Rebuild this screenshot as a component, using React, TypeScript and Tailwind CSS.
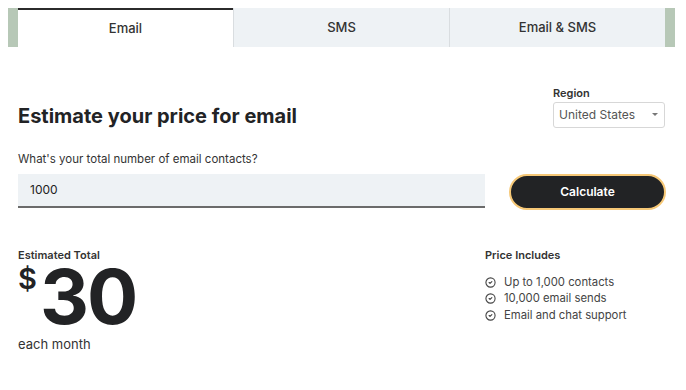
import { CircleCheck } from "lucide-react";

const tabs = ["Email", "SMS", "Email & SMS"];
const includes = ["Up to 1,000 contacts", "10,000 email sends", "Email and chat support"];

export default function App() {
  return (
    <div className="min-h-[390px] w-[686px] bg-white font-['Inter',sans-serif] text-[#222325]">
      <div className="ml-2 mt-2 flex w-[667px] bg-[#b7c8b7] px-[10px]">
        {tabs.map((t, i) => (
          <div
            key={t}
            className={
              i === 0
                ? "flex h-[39px] flex-1 items-center justify-center border-t-2 border-[#2b2b2b] bg-white text-[13px] font-medium text-[#333]"
                : "flex h-[39px] flex-1 items-center justify-center border-l border-[#d9dde0] bg-[#eef2f5] text-[13px] font-medium text-[#333]"
            }
          >
            {t}
          </div>
        ))}
      </div>

      <div className="px-[18px]">
        <div className="mt-[38px] flex items-start justify-between">
          <h1 className="mt-[16px] text-[20px] font-bold text-[#222325]">
            Estimate your price for email
          </h1>
          <div className="mr-[3px] flex flex-col">
            <label className="text-[11px] font-semibold text-[#333]">Region</label>
            <div className="flex h-[26px] w-[112px] items-center justify-between rounded-[3px] border border-[#d7d7d7] pl-[5px] pr-[6px] text-[12px] text-[#555]">
              <span>United States</span>
              <span className="h-0 w-0 border-x-[3px] border-t-[3px] border-x-transparent border-t-[#777]" />
            </div>
          </div>
        </div>

        <p className="mt-[20px] text-[11.5px] text-[#333]">What's your total number of email contacts?</p>

        <div className="mt-[6px] flex items-start">
          <div className="flex h-[34px] w-[467px] items-center border-b-2 border-[#6b6b6b] bg-[#eef2f5] pl-3 text-[12px] text-[#222]">
            1000
          </div>
          <button className="ml-[24px] h-[36px] w-[157px] rounded-full border-2 border-[#f6c877] bg-[#222325] text-[12px] font-semibold text-white">
            Calculate
          </button>
        </div>

        <div className="mt-[37px] flex justify-between">
          <div>
            <div className="text-[11px] font-semibold text-[#333]">Estimated Total</div>
            <div className="flex items-start">
              <span className="text-[29px] font-semibold leading-none">$</span>
              <span className="ml-[3px] mt-[-4px] text-[76px] font-bold leading-[72px] tracking-[-2px]">30</span>
            </div>
            <div className="mt-[3px] text-[13px] text-[#333]">each month</div>
          </div>
          <div className="mr-[21px] w-[162px]">
            <div className="text-[11px] font-semibold text-[#333]">Price Includes</div>
            <ul className="mt-[10px] flex flex-col">
              {includes.map((x) => (
                <li key={x} className="flex h-[16.5px] items-center text-[11.3px] text-[#444]">
                  <CircleCheck className="mr-[8px] h-[11px] w-[11px] text-[#444]" strokeWidth={2.4} />
                  {x}
                </li>
              ))}
            </ul>
          </div>
        </div>
      </div>
    </div>
  );
}
